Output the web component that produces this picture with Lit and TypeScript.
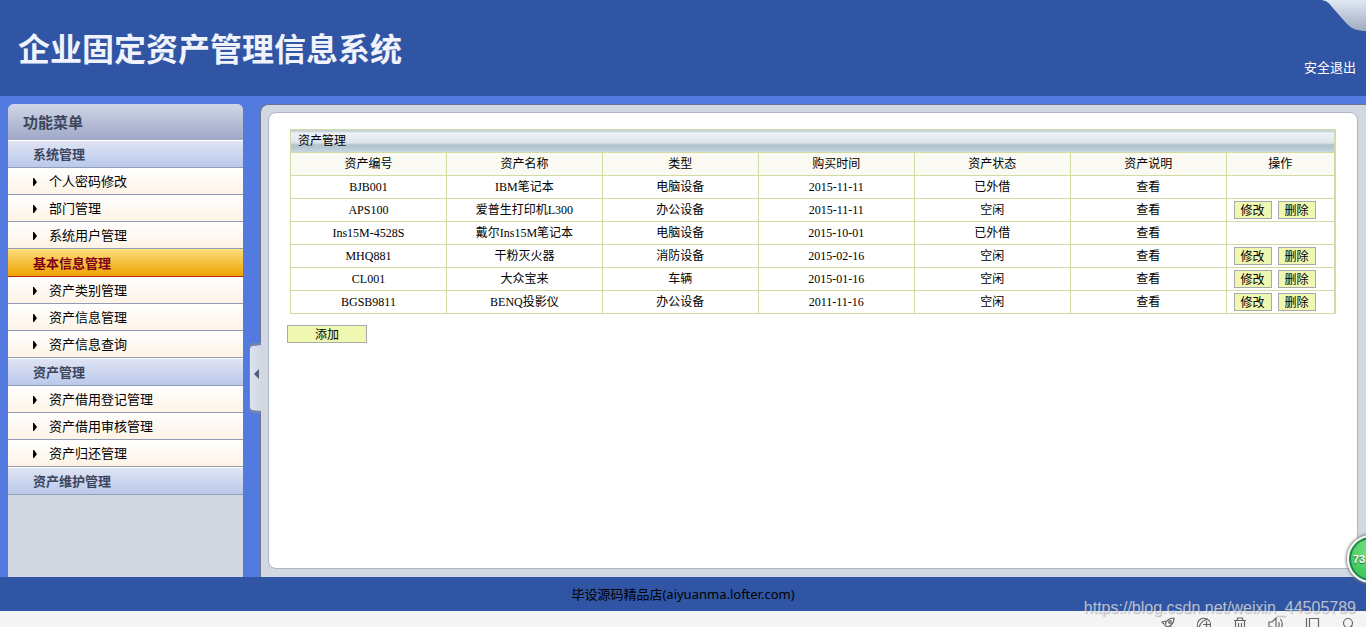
import { LitElement, html, css, nothing } from "lit";
import { customElement, state } from "lit/decorators.js";
import { classMap } from "lit/directives/class-map.js";

interface MenuGroup {
  label: string;
  items: string[];
}

interface Asset {
  code: string;
  name: string;
  kind: string;
  date: string;
  free: boolean;
}

const MENU: MenuGroup[] = [
  { label: "系统管理", items: ["个人密码修改", "部门管理", "系统用户管理"] },
  { label: "基本信息管理", items: ["资产类别管理", "资产信息管理", "资产信息查询"] },
  { label: "资产管理", items: ["资产借用登记管理", "资产借用审核管理", "资产归还管理"] },
  { label: "资产维护管理", items: [] },
];

const COLUMNS = ["资产编号", "资产名称", "类型", "购买时间", "资产状态", "资产说明", "操作"];

const ASSETS: Asset[] = [
  { code: "BJB001", name: "IBM笔记本", kind: "电脑设备", date: "2015-11-11", free: false },
  { code: "APS100", name: "爱普生打印机L300", kind: "办公设备", date: "2015-11-11", free: true },
  { code: "Ins15M-4528S", name: "戴尔Ins15M笔记本", kind: "电脑设备", date: "2015-10-01", free: false },
  { code: "MHQ881", name: "干粉灭火器", kind: "消防设备", date: "2015-02-16", free: true },
  { code: "CL001", name: "大众宝来", kind: "车辆", date: "2015-01-16", free: true },
  { code: "BGSB9811", name: "BENQ投影仪", kind: "办公设备", date: "2011-11-16", free: true },
];

@customElement("side-menu")
class SideMenu extends LitElement {
  @state() private active = 1;

  static styles = css`
    :host {
      display: block;
      background: #d1d8e2;
      border-radius: 6px 6px 0 0;
      overflow: hidden;
    }
    h2 {
      margin: 0;
      padding-left: 15px;
      font-size: 15px;
      font-weight: 700;
      line-height: 36px;
      color: #3b465e;
      background: linear-gradient(#cfd6e7, #9ea7c6);
    }
    ul {
      list-style: none;
      margin: 0;
      padding: 0;
    }
    .group {
      display: block;
      box-sizing: border-box;
      width: 100%;
      height: 28px;
      padding: 0 0 0 25px;
      border: 0;
      border-top: 1px solid #fff;
      border-bottom: 1px solid #929db8;
      background: linear-gradient(#dfe4f4, #bac8ea);
      color: #3b465e;
      font: 700 13px/26px "Noto Sans CJK SC", sans-serif;
      text-align: left;
    }
    .group.active {
      border-top-color: #ffe18a;
      border-bottom-color: #c2281c;
      background: linear-gradient(#fddc78, #eda200);
      color: #7d0016;
    }
    .item {
      display: flex;
      align-items: center;
      gap: 12px;
      height: 26px;
      padding-left: 25px;
      border-bottom: 1px solid #929db5;
      background: linear-gradient(#fff, #fef3e6);
      color: #000;
      font-size: 13px;
      line-height: 26px;
      text-decoration: none;
    }
    .item svg {
      width: 4px;
      height: 8px;
      margin-top: 2px;
    }
  `;

  render() {
    return html`
      <h2>功能菜单</h2>
      <nav>
        ${MENU.map(
          (group, i) => html`
            <button
              class=${classMap({ group: true, active: i === this.active })}
              @click=${() => (this.active = i)}
            >${group.label}</button>
            <ul>
              ${group.items.map(
                (item) => html`<li>
                  <a class="item" href="#">
                    <svg viewBox="0 0 4 8" aria-hidden="true"><path d="M0 0h1l3 4-3 4H0z" /></svg>${item}
                  </a>
                </li>`
              )}
            </ul>
          `
        )}
      </nav>
    `;
  }
}

@customElement("asset-table")
class AssetTable extends LitElement {
  static styles = css`
    :host {
      display: block;
      font-size: 12px;
    }
    table {
      width: 100%;
      table-layout: fixed;
      border-collapse: collapse;
      border: 1px solid #d0dca4;
      border-right-width: 2px;
    }
    .data {
      width: 14.93%;
    }
    th,
    td {
      height: 22px;
      padding: 0;
      border: 1px solid #d0dca4;
      font-family: "Liberation Serif", "Noto Sans CJK SC", serif;
      font-weight: 400;
      line-height: 18px;
      text-align: center;
    }
    .title {
      padding-left: 7px;
      background: linear-gradient(
        #c0cbd4 0,
        #c0cbd4 1px,
        #edf1f5 2px,
        #e6edf2 8px,
        #d7e1e8 13px,
        #b0c2cd 14px,
        #b3c6d1 17px,
        #c9dae2 22px
      );
      text-align: left;
    }
    .heads th {
      background: #fafaf2;
    }
    a {
      color: #000;
      text-decoration: none;
    }
    .actions {
      display: flex;
      gap: 6px;
      padding-left: 7px;
    }
    button {
      width: 38px;
      height: 18px;
      padding: 0;
      border: 1px solid #a9a9a9;
      background: #f0f7b0;
      color: #000;
      font: 12px/16px "Noto Sans CJK SC", sans-serif;
    }
    .add {
      display: block;
      width: 80px;
      margin: 11px 0 0 -3px;
    }
  `;

  render() {
    return html`
      <table>
        <colgroup>
          ${COLUMNS.map((_, i) => html`<col class=${i < 6 ? "data" : "ops"} />`)}
        </colgroup>
        <thead>
          <tr><th class="title" colspan="7">资产管理</th></tr>
          <tr class="heads">${COLUMNS.map((c) => html`<th scope="col">${c}</th>`)}</tr>
        </thead>
        <tbody>
          ${ASSETS.map(
            (a) => html`<tr>
              <td>${a.code}</td>
              <td>${a.name}</td>
              <td>${a.kind}</td>
              <td>${a.date}</td>
              <td>${a.free ? "空闲" : "已外借"}</td>
              <td><a href="#">查看</a></td>
              <td>
                ${a.free
                  ? html`<div class="actions"><button>修改</button><button>删除</button></div>`
                  : nothing}
              </td>
            </tr>`
          )}
        </tbody>
      </table>
      <button class="add">添加</button>
    `;
  }
}

@customElement("app-root")
class AppRoot extends LitElement {
  static styles = css`
    :host {
      position: relative;
      display: flex;
      flex-direction: column;
      height: 100vh;
      overflow: hidden;
      background: #527adf;
      color: #000;
      font-family: "Noto Sans CJK SC", sans-serif;
    }
    header {
      position: relative;
      display: flex;
      flex: none;
      align-items: center;
      justify-content: space-between;
      height: 96px;
      padding: 0 10px 0 18px;
      background: #2f55a4;
    }
    h1 {
      margin: 0;
      padding-bottom: 2px;
      font-size: 32px;
      font-weight: 700;
      line-height: 40px;
      color: #f0f2fc;
    }
    .exit {
      padding-top: 38px;
      color: #fff;
      font-size: 13px;
      line-height: 20px;
      text-decoration: none;
    }
    .corner {
      position: absolute;
      top: 0;
      right: 0;
      width: 44px;
      height: 31px;
    }
    .body {
      display: flex;
      flex: 1;
      min-height: 0;
      padding: 8px 0 0 8px;
    }
    side-menu {
      flex: none;
      width: 235px;
    }
    .splitter {
      position: relative;
      display: flex;
      flex: none;
      align-items: center;
      justify-content: flex-end;
      width: 18px;
      margin-right: -1px;
      padding-top: 74px;
    }
    .handle {
      width: 12px;
      height: 72px;
      padding: 0;
      border: 0;
      background: none;
    }
    .handle svg {
      display: block;
    }
    .frame {
      display: flex;
      flex: 1;
      min-width: 0;
      padding: 7px 8px 8px 7px;
      border: solid #6c7391;
      border-width: 1px 0 0 1px;
      border-radius: 8px 0 0 0;
      background: #d1d8e2;
    }
    main {
      flex: 1;
      min-width: 0;
      padding: 16px 21px;
      border: 1px solid #adb3c9;
      border-radius: 8px;
      background: #fff;
    }
    footer {
      flex: none;
      height: 34px;
      background: #2f55a4;
      font-size: 13px;
      line-height: 34px;
      text-align: center;
    }
    .latin {
      font-family: "Noto Sans", sans-serif;
    }
    .tools {
      display: flex;
      flex: none;
      align-items: flex-start;
      justify-content: flex-end;
      gap: 20px;
      height: 11px;
      padding: 5px 10px 0 0;
      overflow: hidden;
      background: #f4f4f4;
    }
    .tools svg {
      flex: none;
      width: 16px;
      height: 16px;
      fill: none;
      stroke: #666;
      stroke-width: 1.2;
    }
    .mark {
      position: absolute;
      right: 10px;
      bottom: 9px;
      color: rgba(225, 229, 238, 0.75);
      font: 16px/20px "Liberation Sans", sans-serif;
      text-shadow: 1px 1px 1px rgba(90, 90, 100, 0.4);
    }
    .badge {
      position: absolute;
      right: -29px;
      bottom: 44px;
      box-sizing: border-box;
      width: 48px;
      height: 48px;
      padding-left: 4px;
      border: 2px solid #f4f6f4;
      border-radius: 50%;
      background: radial-gradient(circle at 50% 30%, #7ddf86, #46cb60 60%, #3fbe58);
      box-shadow: inset 0 0 0 2px #19864a, 0 0 3px 1px #777;
      color: #fff;
      font: 700 11px/44px "Liberation Sans", sans-serif;
      text-shadow: 0 1px 1px #17642f;
    }
  `;

  render() {
    return html`
      <header>
        <h1>企业固定资产管理信息系统</h1>
        <a class="exit" href="#">安全退出</a>
        <svg class="corner" viewBox="0 0 44 31" aria-hidden="true">
          <defs>
            <linearGradient id="fold" x1="0" y1="0" x2="0" y2="1">
              <stop offset="0" stop-color="#dfe8f3" />
              <stop offset="1" stop-color="#a1aabf" />
            </linearGradient>
          </defs>
          <path d="M0 0C5 1 7 3 10 7L25 24C30 29 36 31 44 31V0z" fill="url(#fold)" />
        </svg>
      </header>
      <div class="body">
        <side-menu></side-menu>
        <div class="splitter">
          <button class="handle" aria-label="收起菜单">
            <svg width="12" height="72" viewBox="0 0 12 72" aria-hidden="true">
              <defs>
                <linearGradient id="grip">
                  <stop offset="0" stop-color="#dfe4f0" />
                  <stop offset="1" stop-color="#d1d8e2" />
                </linearGradient>
              </defs>
              <path d="M12 0C11 1 9 1 4 1Q0 2 0 6V66Q0 71 4 71C9 71 11 72 12 72z" fill="#7684ad" />
              <path d="M12 3L4 4Q1 4 1 8V64Q1 68 4 68L12 69z" fill="url(#grip)" />
              <path d="M10 27v10l-5-5z" fill="#4f5b7c" />
            </svg>
          </button>
        </div>
        <div class="frame">
          <main><asset-table></asset-table></main>
        </div>
      </div>
      <footer>毕设源码精品店<span class="latin">(aiyuanma.lofter.com)</span></footer>
      <div class="tools">
        <svg viewBox="0 0 16 16"><path d="M5 9C6 5 9 2 14 2 14 7 11 10 7 11zM6 5L2 6l2 2M11 10l-1 4-2-2M4 11l-2 3" /><circle cx="10" cy="6" r="1.3" /></svg>
        <svg viewBox="0 0 16 16"><path d="M3 13A6.500 6.500 0 1 1 14 11M7 8.500h7M10.500 5v7M3 12C4 7 7 4 12 3" /></svg>
        <svg viewBox="0 0 16 16"><path d="M2 4.500h12M5.500 4V2h5v2M3.500 5v10h9V5M6.500 7v6M9.500 7v6" /></svg>
        <svg viewBox="0 0 16 16"><path d="M1 6h3l4-4v13l-4-4H1zM10.500 6q1.500 2 0 5M12.500 3q3.500 5 0 10" /></svg>
        <svg viewBox="0 0 16 16"><path d="M5.500 2.500h9v9h-9zM2.500 2v12h9" /></svg>
        <svg viewBox="0 0 16 16"><circle cx="8" cy="7" r="4.500" /><path d="M11 10l4 4" /></svg>
      </div>
      <div class="mark">https://blog.csdn.net/weixin_44505789</div>
      <div class="badge">73</div>
    `;
  }
}
